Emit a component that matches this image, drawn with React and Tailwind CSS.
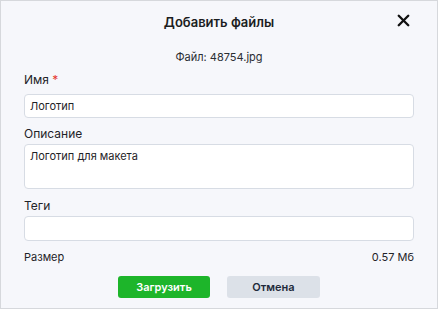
import { X } from 'lucide-react';

const font = { fontFamily: 'Inter, "Noto Sans", sans-serif' };

function Field({ label, required, children, className = '' }) {
  return (
    <div className={className}>
      <div className="text-[12px] leading-4 text-[#1f2328]">
        {label}
        {required && <span className="text-[#e5372f]"> *</span>}
      </div>
      {children}
    </div>
  );
}

export default function App() {
  return (
    <div className="w-[438px] h-[309px] border border-[#d6d8dc] bg-[#f6f7fb] px-[23px] text-[#1f2328]" style={font}>
      {/* Header */}
      <div className="grid grid-cols-[1fr_auto_1fr] items-center pt-[10px] h-[32px]">
        <div />
        <h2 className="text-[13px] font-semibold leading-5 text-[#1b1d21]">Добавить файлы</h2>
        <button className="justify-self-end mr-[1px] -mt-[3px] text-[#111]">
          <X size={19} strokeWidth={3} />
        </button>
      </div>

      <p className="mt-[16px] text-center text-[11px] leading-4 text-[#2a2d33]">Файл: 48754.jpg</p>

      <Field label="Имя" required className="mt-[7px]">
        <input
          defaultValue="Логотип"
          className="mt-[6px] block w-full h-[24px] rounded-[4px] border border-[#d7dce4] bg-white px-[5px] text-[11px] text-[#1f2328] outline-none"
        />
      </Field>

      <Field label="Описание" className="mt-[8px]">
        <textarea
          defaultValue="Логотип для макета"
          className="mt-[2px] block w-full h-[45px] resize-none rounded-[4px] border border-[#d7dce4] bg-white px-[5px] pt-[3px] text-[11px] leading-4 text-[#1f2328] outline-none"
        />
      </Field>

      <Field label="Теги" className="mt-[9px]">
        <input className="mt-[2px] block w-full h-[25px] rounded-[4px] border border-[#d7dce4] bg-white px-[5px] text-[11px] outline-none" />
      </Field>

      <div className="mt-[8px] flex justify-between text-[11px] leading-4 text-[#1f2328]">
        <span>Размер</span>
        <span>0.57 Мб</span>
      </div>

      <div className="mt-[11px] flex justify-center gap-[17px]">
        <button className="w-[92px] h-[22px] rounded-[3px] bg-[#1db52a] text-[11px] font-semibold text-white">Загрузить</button>
        <button className="w-[93px] h-[22px] rounded-[3px] bg-[#dce1e8] text-[11px] font-semibold text-[#1e2a3b]">Отмена</button>
      </div>
    </div>
  );
}
